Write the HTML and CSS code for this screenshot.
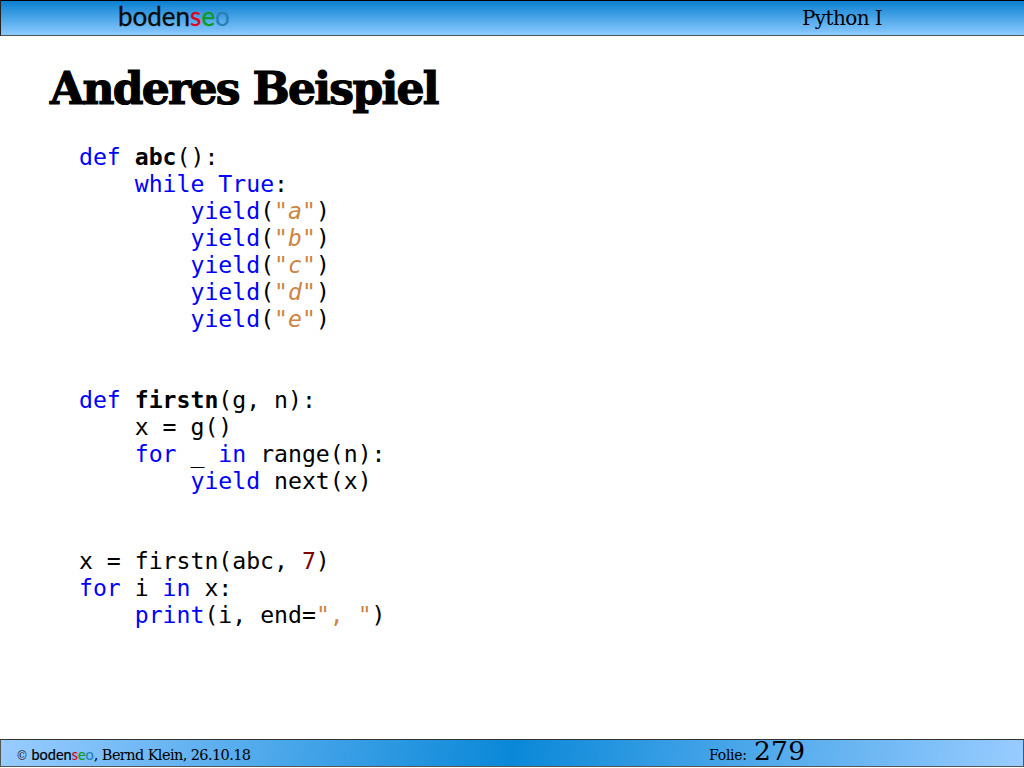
FILE: index.html
```html
<!DOCTYPE html>
<html lang="de">
<head>
<meta charset="utf-8">
<title>Anderes Beispiel</title>
<link rel="stylesheet" href="styles.css">
</head>
<body>
<div class="slide">
  <header class="top">
    <div class="logo">boden<span class="r">s</span><span class="g">e</span><span class="b">o</span></div>
    <div class="course">Python I</div>
  </header>
  <main class="content">
    <h1>Anderes Beispiel</h1>
<pre class="code"><span class="k">def</span> <b>abc</b>():
    <span class="k">while</span> <span class="k">True</span>:
        <span class="k">yield</span>(<span class="s">"<i>a</i>"</span>)
        <span class="k">yield</span>(<span class="s">"<i>b</i>"</span>)
        <span class="k">yield</span>(<span class="s">"<i>c</i>"</span>)
        <span class="k">yield</span>(<span class="s">"<i>d</i>"</span>)
        <span class="k">yield</span>(<span class="s">"<i>e</i>"</span>)


<span class="k">def</span> <b>firstn</b>(g, n):
    x = g()
    <span class="k">for</span> _ <span class="k">in</span> range(n):
        <span class="k">yield</span> next(x)


x = firstn(abc, <span class="n">7</span>)
<span class="k">for</span> i <span class="k">in</span> x:
    <span class="k">print</span>(i, end=<span class="s">", "</span>)</pre>
  </main>
  <footer class="bottom">
    <div class="credit"><span class="copy">©</span> <span class="flogo">boden<span class="r">s</span><span class="g">e</span><span class="b">o</span></span>, Bernd Klein, 26.10.18</div>
    <div class="folie">Folie: <span class="num">279</span></div>
  </footer>
</div>
</body>
</html>
```
FILE: styles.css
```css
* { box-sizing: border-box; }
html, body { margin: 0; padding: 0; background: #fff; }
.slide {
  width: 1024px;
  height: 767px;
  display: flex;
  flex-direction: column;
  overflow: hidden;
  font-family: "Liberation Serif", serif;
  color: #000;
}
.top {
  height: 36px;
  flex: none;
  display: flex;
  align-items: center;
  border-top: 1px solid #000;
  border-left: 1px solid #222;
  border-bottom: 1px solid #555;
  background: linear-gradient(to bottom, #0a80d0 0%, #8ccaff 100%);
}
.logo {
  margin-left: 117px;
  width: 684px;
  font-family: "Lato", sans-serif;
  font-size: 26px;
  line-height: 30px;
  margin-top: -4px;
  color: #0a0a0a;
  -webkit-text-stroke: 0.3px currentColor;
}
.r { color: #e0001a; }
.g { color: #109a20; }
.b { color: #2a80b8; }
.course {
  font-family: "DejaVu Serif", serif;
  font-size: 20px;
  letter-spacing: -0.6px;
  line-height: 30px;
}
.content {
  flex: 1;
  padding: 28px 0 0 50px;
}
h1 {
  margin: 0;
  font-family: "DejaVu Serif", serif;
  font-weight: 900;
  font-size: 44px;
  letter-spacing: -1.7px;
  line-height: 50px;
  -webkit-text-stroke: 1.2px #000;
}
.code {
  margin: 30.1px 0 0 29px;
  font-family: "DejaVu Sans Mono", monospace;
  font-size: 23.15px;
  line-height: 26.95px;
  color: #000;
}
.code b { font-weight: 700; }
.k { color: #0000ff; }
.s { color: #cd853f; }
.n { color: #800000; }
.bottom {
  height: 28px;
  flex: none;
  display: flex;
  align-items: center;
  border-top: 1px solid #333;
  border-bottom: 1px solid #555;
  border-left: 1px solid #555;
  border-right: 1px solid #555;
  background: linear-gradient(100deg, #99ccff 0%, #0a88d8 50%, #99ccff 100%);
}
.credit {
  margin-left: 15px;
  margin-top: 3px;
  width: 693px;
  font-family: "DejaVu Serif", serif;
  font-size: 14.5px;
  letter-spacing: -0.6px;
  white-space: nowrap;
}
.copy {
  font-size: 12px;
  color: #222;
}
.flogo {
  font-family: "Lato", sans-serif;
  font-size: 14.5px;
  letter-spacing: 0;
  -webkit-text-stroke: 0.2px currentColor;
}
.folie {
  font-family: "DejaVu Serif", serif;
  font-size: 14px;
  letter-spacing: -0.25px;
  line-height: 24px;
}
.num {
  font-size: 26.5px;
  letter-spacing: 0.2px;
  line-height: 24px;
  margin-left: 3px;
}
```
